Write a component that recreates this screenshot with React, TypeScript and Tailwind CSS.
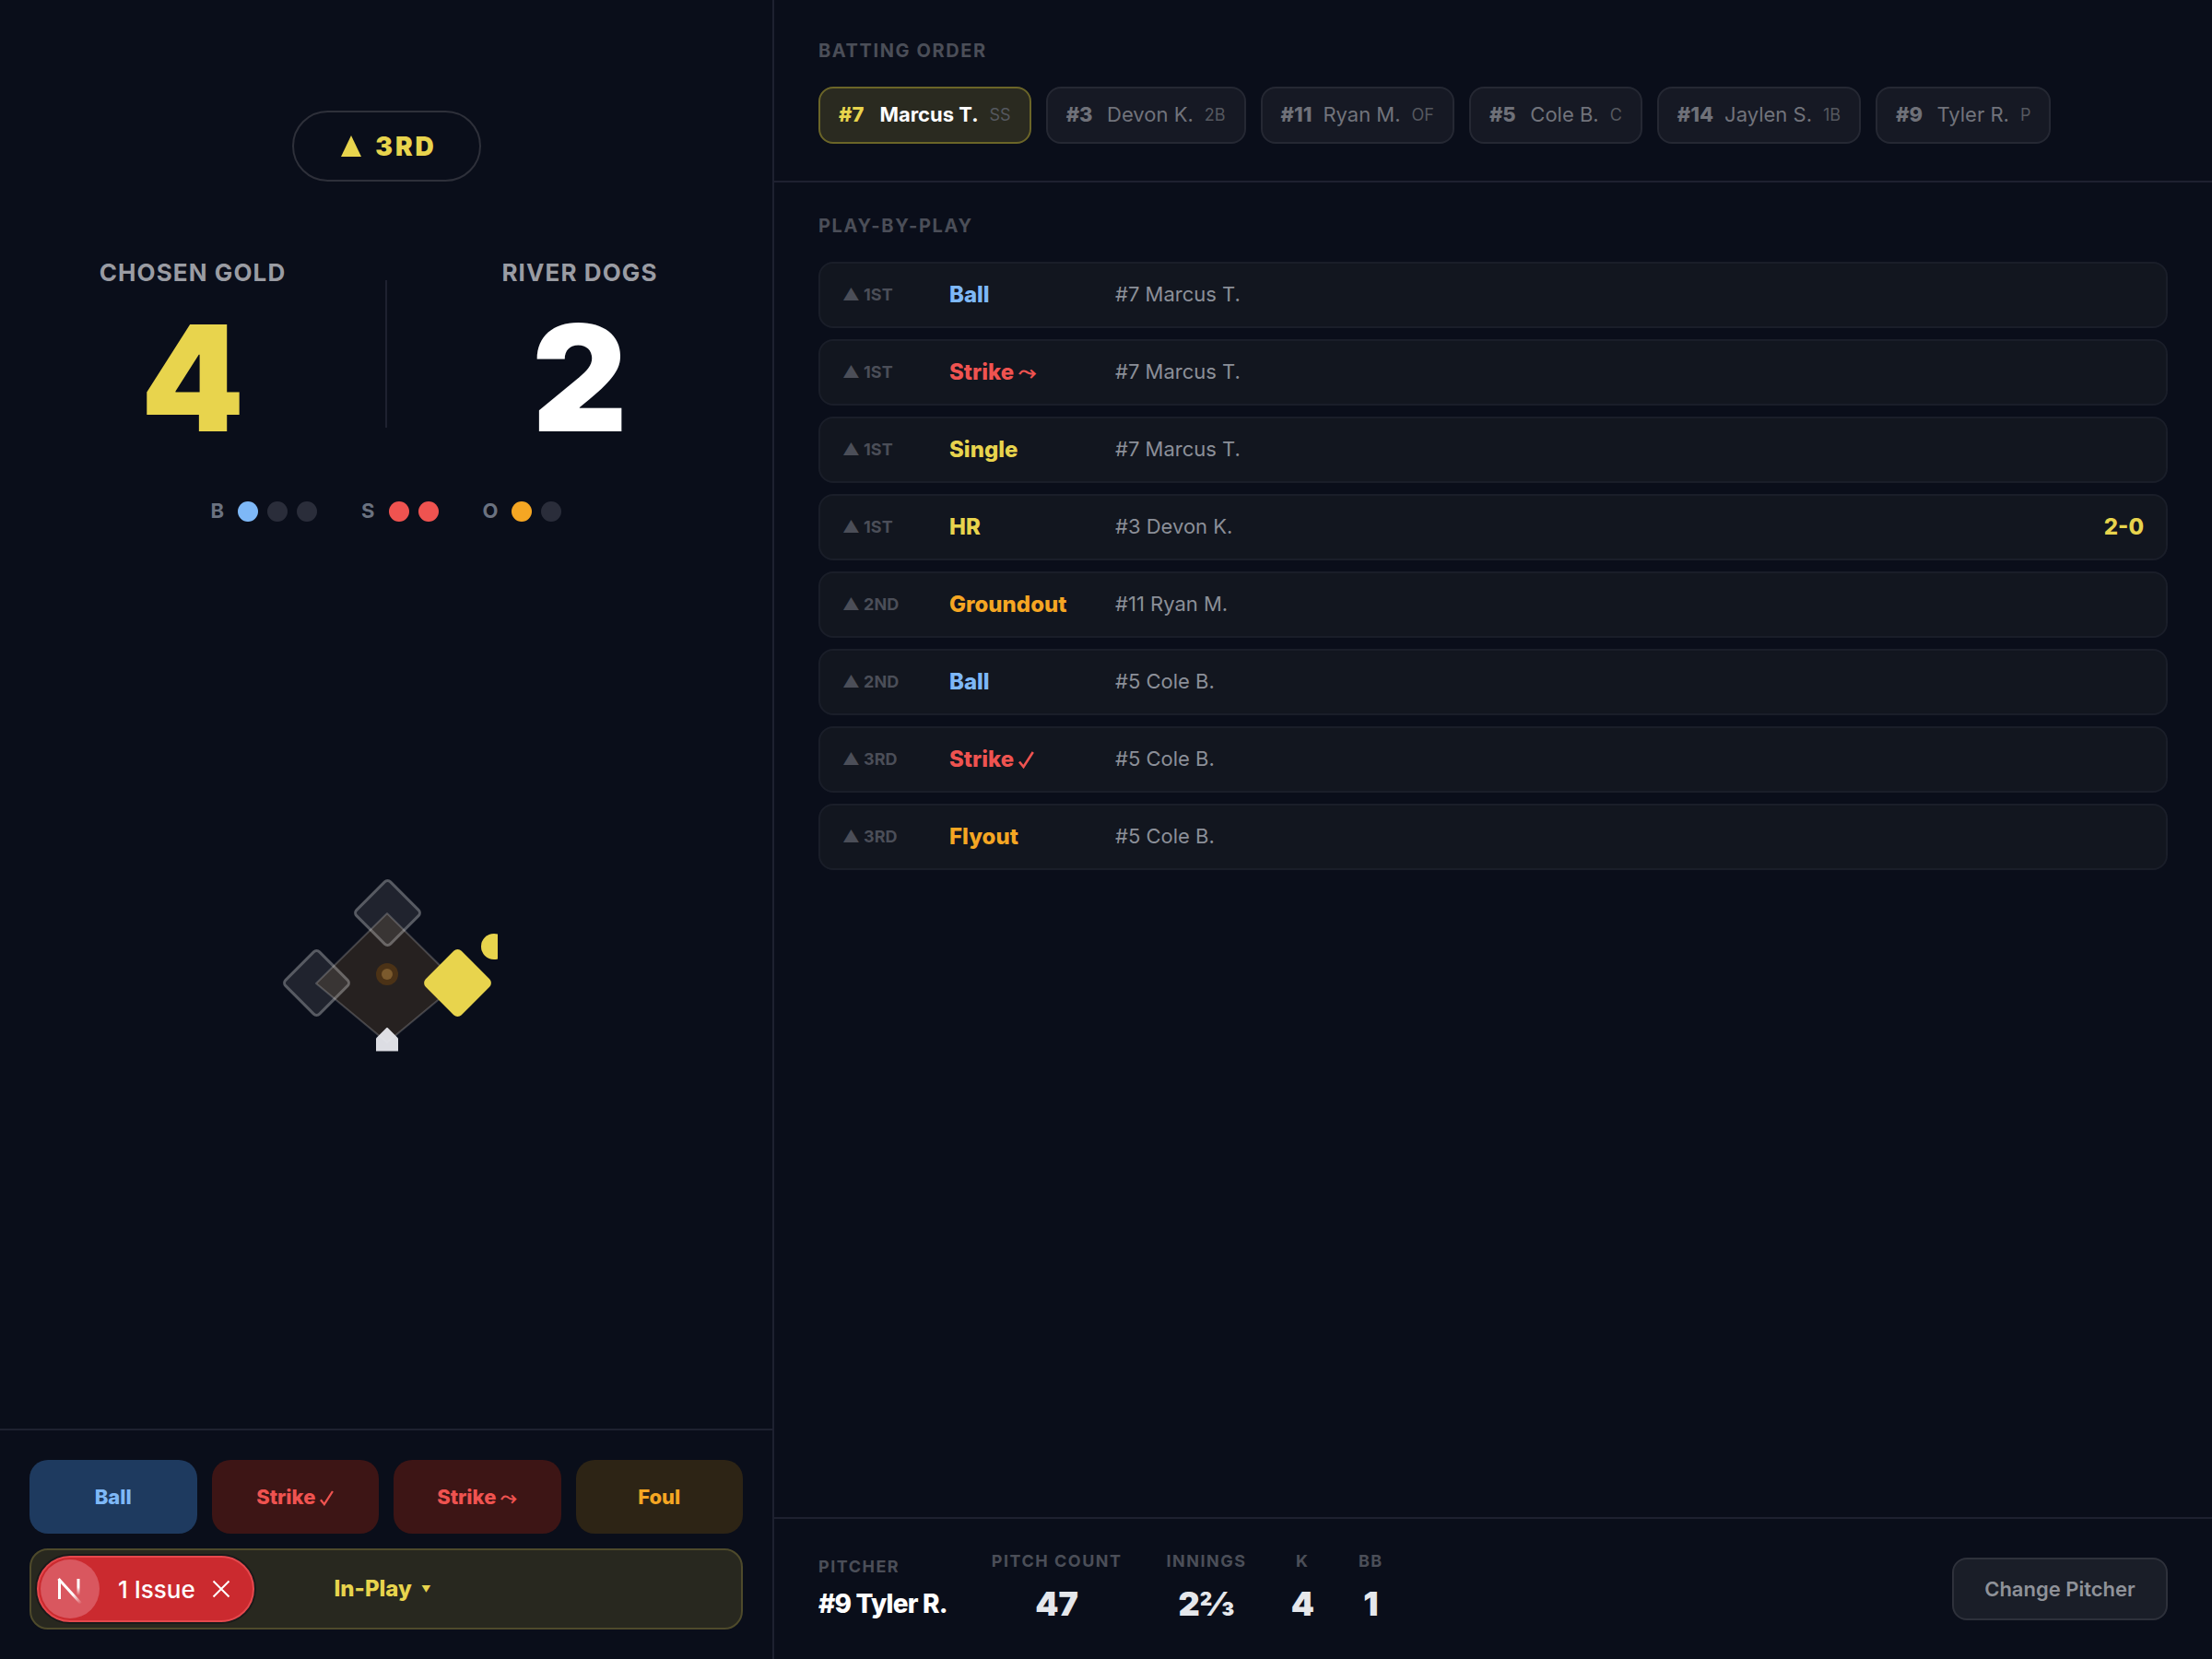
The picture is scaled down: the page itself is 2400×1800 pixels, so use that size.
const batters = [
  { num: '#7', name: 'Marcus T.', pos: 'SS', active: true },
  { num: '#3', name: 'Devon K.', pos: '2B' },
  { num: '#11', name: 'Ryan M.', pos: 'OF' },
  { num: '#5', name: 'Cole B.', pos: 'C' },
  { num: '#14', name: 'Jaylen S.', pos: '1B' },
  { num: '#9', name: 'Tyler R.', pos: 'P' },
];

const BLUE = 'text-[#7eb8f7]';
const RED = 'text-[#ef5350]';
const YELLOW = 'text-[#e8d44d]';
const ORANGE = 'text-[#f5a623]';

const plays = [
  { inning: '1ST', event: 'Ball', color: BLUE, player: '#7 Marcus T.' },
  { inning: '1ST', event: 'Strike', mark: 'swing', color: RED, player: '#7 Marcus T.' },
  { inning: '1ST', event: 'Single', color: YELLOW, player: '#7 Marcus T.' },
  { inning: '1ST', event: 'HR', color: YELLOW, player: '#3 Devon K.', score: '2-0' },
  { inning: '2ND', event: 'Groundout', color: ORANGE, player: '#11 Ryan M.' },
  { inning: '2ND', event: 'Ball', color: BLUE, player: '#5 Cole B.' },
  { inning: '3RD', event: 'Strike', mark: 'look', color: RED, player: '#5 Cole B.' },
  { inning: '3RD', event: 'Flyout', color: ORANGE, player: '#5 Cole B.' },
];

const stats = [
  { label: 'PITCH COUNT', value: '47' },
  { label: 'INNINGS', value: '2⅔' },
  { label: 'K', value: '4' },
  { label: 'BB', value: '1' },
];

function Dots({ label, on, off, color }: { label: string; on: number; off: number; color: string }) {
  return (
    <div className="flex items-center gap-[10px]">
      <span className="mr-[4px] text-[22px] font-bold tracking-[1px] text-[#6b7280]">{label}</span>
      {Array.from({ length: on }).map((_, i) => (
        <span key={i} className={`h-[22px] w-[22px] rounded-full ${color}`} />
      ))}
      {Array.from({ length: off }).map((_, i) => (
        <span key={i} className="h-[22px] w-[22px] rounded-full bg-[#2a2d3a]" />
      ))}
    </div>
  );
}

function SwingMark() {
  return <span className="ml-[5px] font-['DejaVu_Sans',sans-serif] font-bold">⤳</span>;
}

function LookMark({ size }: { size: number }) {
  return (
    <svg className="ml-[5px] inline-block align-[-2px]" width={size} height={size + 2} viewBox="0 0 17 19" fill="none">
      <path d="M1 11.5L5.5 17L15.8 1" stroke="currentColor" strokeWidth="2.6" />
    </svg>
  );
}

function Diamond() {
  return (
    <div className="relative h-[240px] w-[240px] overflow-hidden">
      {/* infield */}
      <svg className="absolute inset-0" width="240" height="240" viewBox="0 0 240 240">
        <polygon
          points="120,47 197,123 120,187 43,123"
          fill="#e8a04d"
          fillOpacity="0.13"
          stroke="#ffffff"
          strokeOpacity="0.2"
          strokeWidth="2"
          strokeLinejoin="round"
        />
      </svg>
      {/* mound */}
      <div className="absolute left-[108px] top-[101px] flex h-[24px] w-[24px] items-center justify-center rounded-full bg-[#4b3216]">
        <div className="h-[12px] w-[12px] rounded-full bg-[#7b5a2d]" />
      </div>
      {/* second */}
      <div className="absolute left-[92.5px] top-[19.5px] h-[55px] w-[55px] rotate-45 rounded-[6px] border-[3px] border-[#ffffff40] bg-[#ffffff17]" />
      {/* third */}
      <div className="absolute left-[15.5px] top-[95.5px] h-[55px] w-[55px] rotate-45 rounded-[6px] border-[3px] border-[#ffffff40] bg-[#ffffff17]" />
      {/* first */}
      <div className="absolute left-[168.5px] top-[95.5px] h-[55px] w-[55px] rotate-45 rounded-[6px] bg-[#e8d44d]" />
      {/* runner */}
      <div className="absolute left-[222px] top-[69px] h-[28px] w-[28px] rounded-full bg-[#e8d44d]" />
      {/* home */}
      <div className="absolute left-[108px] top-[171px] h-[26px] w-[24px] bg-[#e8e9eef2] [clip-path:polygon(50%_0%,100%_46%,100%_100%,0%_100%,0%_46%)]" />
    </div>
  );
}

function NextMark() {
  return (
    <svg width="28" height="32" viewBox="0 0 28 32" fill="none">
      <defs>
        <linearGradient id="nDiag" x1="17" y1="22" x2="26" y2="32" gradientUnits="userSpaceOnUse">
          <stop stopColor="white" />
          <stop offset="1" stopColor="white" stopOpacity="0" />
        </linearGradient>
        <linearGradient id="nBar" x1="23" y1="14" x2="23" y2="23" gradientUnits="userSpaceOnUse">
          <stop stopColor="white" />
          <stop offset="1" stopColor="white" stopOpacity="0" />
        </linearGradient>
      </defs>
      <path d="M2.5 27V5" stroke="white" strokeWidth="3" />
      <path d="M1.5 5L26 32" stroke="url(#nDiag)" strokeWidth="3" />
      <path d="M23 5V23" stroke="url(#nBar)" strokeWidth="3" />
    </svg>
  );
}

export default function App() {
  return (
    <div className="flex h-[1800px] w-[2400px] overflow-hidden bg-[#0a0e1a] font-['Inter','Noto_Sans',sans-serif] text-white">
      {/* Left panel */}
      <div className="flex w-[840px] shrink-0 flex-col border-r-2 border-[#1e2130]">
        <div className="flex flex-1 flex-col items-center pt-[120px]">
          <div className="flex h-[77px] w-[205px] items-center justify-center gap-[15px] rounded-full border-2 border-[#2e303a] pl-[6px] text-[28px] font-black tracking-[3px] text-[#e8d44d]">
            <span className="h-0 w-0 border-x-[11.5px] border-b-[23px] border-x-transparent border-b-[#e8d44d]" />
            <span>3RD</span>
          </div>

          <div className="mt-[84px] flex w-full items-start">
            <div className="flex flex-1 flex-col items-center">
              <span className="text-[26px] font-bold leading-[30px] tracking-[1.1px] text-[#9a9ca3]">CHOSEN GOLD</span>
              <span className="mt-[19px] text-[160px] font-black leading-[160px] text-[#e8d44d]">4</span>
            </div>
            <div className="mt-[23px] h-[160px] w-[2px] bg-[#1e2130]" />
            <div className="flex flex-1 flex-col items-center">
              <span className="text-[26px] font-bold leading-[30px] tracking-[1.1px] text-[#9a9ca3]">RIVER DOGS</span>
              <span className="mt-[19px] text-[160px] font-black leading-[160px] text-white">2</span>
            </div>
          </div>

          <div className="mt-[48px] flex items-center gap-[48px]">
            <Dots label="B" on={1} off={2} color="bg-[#7eb8f7]" />
            <Dots label="S" on={2} off={0} color="bg-[#ef5350]" />
            <Dots label="O" on={1} off={1} color="bg-[#f5a623]" />
          </div>

          <div className="ml-[2px] mt-[6px] flex flex-1 items-center justify-center">
            <Diamond />
          </div>
        </div>

        <div className="flex flex-col gap-[16px] border-t-2 border-[#1e2130] px-[32px] pb-[32px] pt-[32px]">
          <div className="grid grid-cols-4 gap-[16px]">
            <button className="h-[80px] rounded-[20px] bg-[#1e3a5f] text-[22px] font-extrabold text-[#7eb8f7]">Ball</button>
            <button className="h-[80px] rounded-[20px] bg-[#3d1515] text-[22px] font-extrabold text-[#ef5350]">Strike<LookMark size={15} /></button>
            <button className="h-[80px] rounded-[20px] bg-[#3d1515] text-[22px] font-extrabold text-[#ef5350]">Strike<SwingMark /></button>
            <button className="h-[80px] rounded-[20px] bg-[#2d2415] text-[22px] font-extrabold text-[#f5a623]">Foul</button>
          </div>
          <div className="relative flex h-[88px] items-center justify-center rounded-[20px] border-2 border-[#4e4a2b] bg-[#28281f] text-[24px] font-extrabold text-[#e8d44d]">
            <span>In-Play</span>
            <span className="ml-[10px] mr-[8px] text-[10px]">▼</span>
            <div className="absolute left-[6px] top-[6px] flex h-[72px] w-[236px] items-center rounded-full border-2 border-[#e5484d] bg-[#cb2a2f] pl-[2px] shadow-[0_0_0_2px_#1a1a1a]">
              <div className="flex h-[64px] w-[64px] items-center justify-center rounded-full bg-[#d9575f]">
                <NextMark />
              </div>
              <span className="ml-[20px] text-[26px] font-medium text-white">1 Issue</span>
              <svg className="ml-[18px]" width="20" height="20" viewBox="0 0 20 20" fill="none">
                <path d="M1.5 1.5L18.5 18.5M18.5 1.5L1.5 18.5" stroke="white" strokeWidth="2" />
              </svg>
            </div>
          </div>
        </div>
      </div>

      {/* Right panel */}
      <div className="flex min-w-0 flex-1 flex-col">
        <div className="border-b-2 border-[#1e2130] px-[48px] pb-[40px] pt-[41px]">
          <div className="text-[20px] font-bold leading-[28px] tracking-[1.6px] text-[#4b4e58]">BATTING ORDER</div>
          <div className="mt-[25px] flex gap-[16px]">
            {batters.map((b) => (
              <div
                key={b.num}
                className={`flex h-[62px] items-center gap-[12px] rounded-[16px] border-2 px-[20px] pb-[2px] ${
                  b.active ? 'border-[#6b6528] bg-[#2a2a20]' : 'border-[#252833] bg-[#161924]'
                }`}
              >
                <span className={`min-w-[32.4px] text-[22px] font-extrabold ${b.active ? 'text-[#e8d44d]' : 'text-[#6f7179]'}`}>{b.num}</span>
                <span className={`text-[22px] ${b.active ? 'font-bold text-white' : 'text-[#71737b]'}`}>{b.name}</span>
                <span className="text-[18px] text-[#55585f]">{b.pos}</span>
              </div>
            ))}
          </div>
        </div>

        <div className="flex-1 px-[48px] pt-[33px]">
          <div className="text-[20px] font-bold leading-[28px] tracking-[1.6px] text-[#4b4e58]">PLAY-BY-PLAY</div>
          <div className="mt-[25px] flex flex-col gap-[12px]">
            {plays.map((p, i) => (
              <div key={i} className="flex h-[72px] items-center rounded-[16px] border-2 border-[#1a1e29] bg-[#12161f] px-[24px]">
                <span className="w-[116px] shrink-0 pb-[1px] text-[18px] font-bold text-[#4b4e58]">▲ {p.inning}</span>
                <span className={`w-[180px] shrink-0 text-[24px] font-extrabold ${p.color}`}>
                  {p.event}
                  {p.mark === 'swing' && <SwingMark />}
                  {p.mark === 'look' && <LookMark size={17} />}
                </span>
                <span className="flex-1 pb-[2px] text-[22px] text-[#8b8f98]">{p.player}</span>
                {p.score && <span className="text-[24px] font-extrabold text-[#e8d44d]">{p.score}</span>}
              </div>
            ))}
          </div>
        </div>

        <div className="flex h-[154px] items-center justify-between border-t-2 border-[#1e2130] px-[48px]">
          <div className="flex items-center gap-[48px]">
            <div className="flex flex-col pb-[3px]">
              <span className="text-[18px] font-bold leading-[24px] tracking-[1.5px] text-[#4b4e58]">PITCHER</span>
              <span className="mt-[10px] text-[28px] font-extrabold leading-[36px] tracking-[-0.8px] text-white">#9 Tyler R.</span>
            </div>
            {stats.map((s) => (
              <div key={s.label} className="flex flex-col items-center pb-[6px]">
                <span className="text-[18px] font-bold leading-[24px] tracking-[1.5px] text-[#4b4e58]">{s.label}</span>
                <span className="mt-[14px] text-[36px] font-black leading-[40px] text-[#e5e7eb]">{s.value}</span>
              </div>
            ))}
          </div>
          <button className="h-[68px] w-[234px] rounded-[16px] border-2 border-[#2e313b] bg-[#1a1e28] text-[22px] font-semibold text-[#8f9299]">
            Change Pitcher
          </button>
        </div>
      </div>
    </div>
  );
}
